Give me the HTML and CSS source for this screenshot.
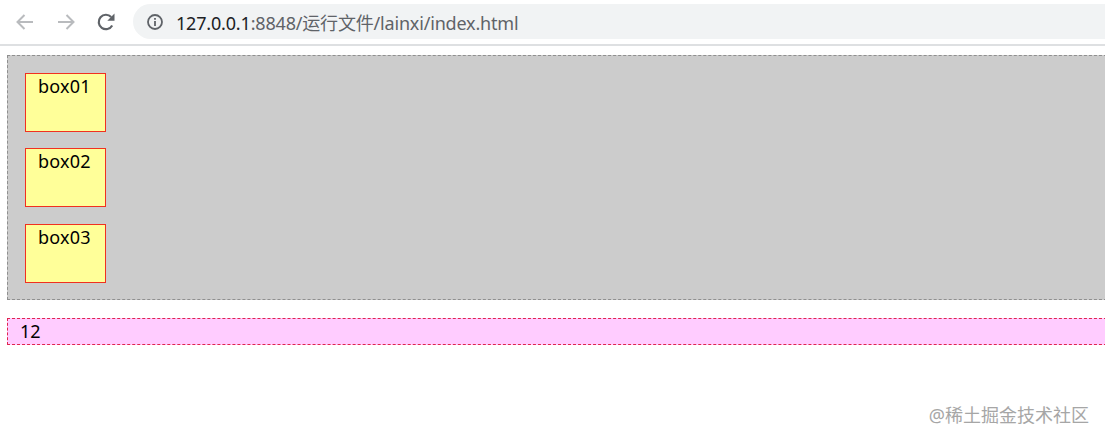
FILE: index.html
```html
<!DOCTYPE html>
<html lang="en">
<head>
  <meta charset="UTF-8">
  <title>index.html</title>
  <link rel="stylesheet" href="styles.css">
</head>
<body>

  <div class="toolbar">
    <div class="nav-buttons">
      <svg class="nav-icon" width="24" height="24" viewBox="0 0 24 24"><path d="M20 12H5M11.5 5L4.5 12l7 7" fill="none" stroke="#b9bbbe" stroke-width="2"/></svg>
      <svg class="nav-icon" width="24" height="24" viewBox="0 0 24 24"><path d="M4 12h15M12.5 5l7 7-7 7" fill="none" stroke="#b9bbbe" stroke-width="2"/></svg>
      <svg class="nav-icon" width="24" height="24" viewBox="0 0 24 24"><path d="M18.2 15.5A7.2 7.2 0 1 1 17.2 7" fill="none" stroke="#5f6368" stroke-width="2.2"/><path d="M20.5 3.5v7.2h-7.2z" fill="#5f6368"/></svg>
    </div>
    <div class="address-bar">
      <svg class="info-icon" width="18" height="18" viewBox="0 0 18 18"><circle cx="9" cy="9" r="7" fill="none" stroke="#5f6368" stroke-width="1.8"/><path d="M9 8v5M9 5v1.8" stroke="#5f6368" stroke-width="1.8"/></svg>
      <span class="url"><span class="url-host">127.0.0.1</span>:8848/运行文件/lainxi/index.html</span>
    </div>
  </div>

  <div class="page">
    <div class="outer">
      <div class="box">box01</div>
      <div class="box">box02</div>
      <div class="box">box03</div>
    </div>
    <div class="footer-box">12</div>
  </div>

  <div class="watermark">@稀土掘金技术社区</div>

</body>
</html>
```

FILE: styles.css
```css
html, body {
  margin: 0;
  height: 441px;
  overflow: hidden;
}

body {
  font-family: "Noto Sans", "Noto Sans CJK SC", sans-serif;
  background: white;
  color: black;
}

.toolbar {
  height: 44px;
  display: flex;
  align-items: center;
  border-bottom: 2px solid #dee0e2;
  padding-left: 13px;
}

.nav-buttons {
  display: flex;
  gap: 16.5px;
  margin-right: 15px;
}

.address-bar {
  flex: 1;
  height: 35px;
  margin-bottom: 1px;
  display: flex;
  align-items: center;
  background: #f1f3f4;
  border-radius: 18px 0 0 18px;
  padding-left: 13px;
}

.info-icon {
  margin-right: 12px;
}

.url {
  font-size: 18px;
  color: #5f6368;
  letter-spacing: -0.18px;
}

.url-host {
  color: #202124;
}

.page {
  padding: 9px 0 0 7px;
}

.outer {
  width: 1110px;
  height: 245px;
  box-sizing: border-box;
  border: 1px dashed #8f8f8f;
  background: #cccccc;
  padding: 17px 0 0 17px;
  display: flex;
  flex-direction: column;
  gap: 16.4px;
}

.box {
  width: 81px;
  height: 59px;
  box-sizing: border-box;
  border: 1px solid #f03020;
  background: #ffff99;
  padding-left: 12px;
  font-size: 18px;
  line-height: 25px;
  letter-spacing: 0.2px;
}

.footer-box {
  width: 1110px;
  height: 27px;
  box-sizing: border-box;
  margin-top: 18px;
  border: 1px dashed #e0254f;
  background: #ffccff;
  padding-left: 12px;
  font-size: 18px;
  line-height: 25px;
}

.watermark {
  position: absolute;
  right: 16px;
  top: 403px;
  font-size: 18px;
  line-height: 24px;
  color: #a6a6a6;
}
```
